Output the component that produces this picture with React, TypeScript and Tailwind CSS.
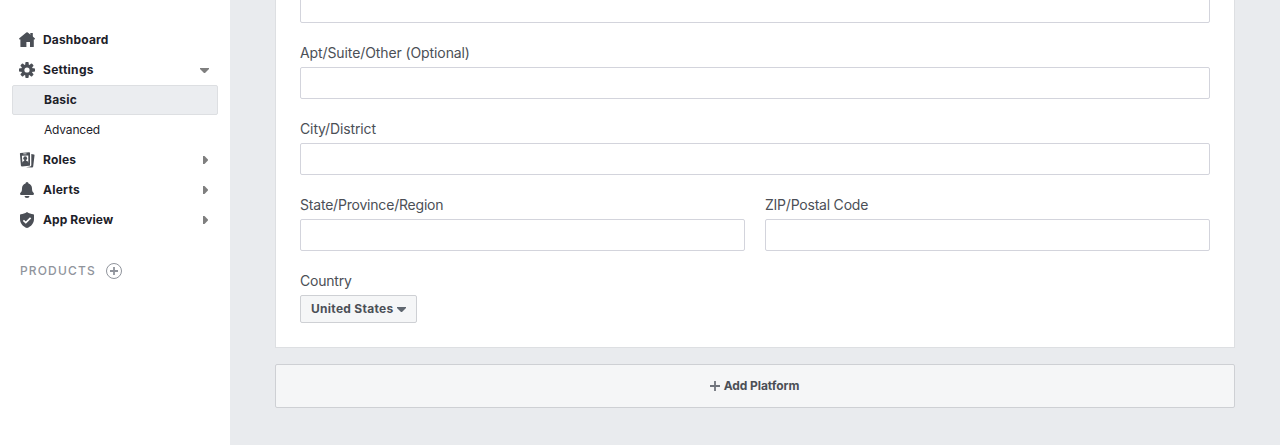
import React from "react";

const Home = () => (
  <svg width="16" height="16" viewBox="0 0 16 16" fill="#4b4f56">
    <path d="M8.8.5 15.800 6.300Q16.200 6.800 15.600 7.500H14.800V14.600a.5.5 0 0 1-.5.500H11V10H7.400V15.100H1.900a.5.5 0 0 1-.5-.5V7.500H.5Q-.2 6.800.3 6.300L7.300.5a1.200 1.200 0 0 1 1.500 0Z" />
    <path d="M11.300 1h2.500v5h-2.500Z" />
  </svg>
);

const Gear = () => (
  <svg width="16" height="16" viewBox="0 0 16 16">
    <g fill="#4b4f56">
      {[0, 45, 90, 135].map((a) => (
        <rect key={a} x="6.300" y="0" width="3.400" height="16" rx="0.9" transform={`rotate(${a} 8 8)`} />
      ))}
      <circle cx="8" cy="8" r="5.800" />
    </g>
    <circle cx="8" cy="8" r="2.600" fill="#fff" />
  </svg>
);

const Roles = () => (
  <svg width="16" height="16" viewBox="0 0 16 16" fill="#4b4f56">
    <path fillRule="evenodd" d="M1.700.9 10 .2a.9.9 0 0 1 1 .9V12.900a.9.9 0 0 1-.9.9L2.900 14.400a.9.9 0 0 1-1-.8L.9 1.800A.8.8 0 0 1 1.700.9ZM4.300 1.400v.9h3.200v-.9ZM2.900 3.700 3.400 11.300 9.300 10.900V3.500Z" />
    <circle cx="6.200" cy="6.200" r="1.900" />
    <path d="M5.200 7.500h2v1.300l2.300 1v1.800l-6.300.5V10l2-1.200Z" />
    <path d="M12.300 1.900 14.900 2.400a.8.8 0 0 1 .6 1L14.200 14.600a.9.9 0 0 1-1 .8L7 15.200l4.200-.8a1.300 1.300 0 0 0 1.100-1.200Z" />
  </svg>
);

const Bell = () => (
  <svg width="16" height="16" viewBox="0 0 16 16" fill="#4b4f56">
    <path d="M8 0a1.500 1.500 0 0 1 1.500 1.500C11.800 2.200 13 4.200 13 6.500c0 2.300.5 3.300 1.500 4.300.9 1 .5 2.200-.7 2.200H2.200c-1.200 0-1.600-1.200-.7-2.200C2.500 9.800 3 8.800 3 6.500c0-2.300 1.200-4.300 3.500-5A1.500 1.500 0 0 1 8 0Z" />
    <path d="M5.500 14h5a2.500 2 0 0 1-5 0Z" />
  </svg>
);

const Shield = () => (
  <svg width="16" height="16" viewBox="0 0 16 16">
    <path d="M8 0c2 1.400 4 2 6.200 2.200.5 0 .8.400.8.900V7c0 4.200-2.800 7.600-7 9-4.200-1.400-7-4.800-7-9V3.100c0-.5.300-.9.800-.9C4 2 6 1.400 8 0Z" fill="#4b4f56" />
    <path d="m4.400 8.300 2.400 2.300 4.800-4.700" fill="none" stroke="#fff" strokeWidth="1.700" />
  </svg>
);

const Down = ({ className }: { className: string }) => (
  <svg width="9" height="5" viewBox="0 0 9 5" className={className} fill="currentColor">
    <path d="M0 0h9v1L5.500 4.500q-1 1-2 0L0 1Z" />
  </svg>
);

const Right = () => (
  <svg width="5" height="8" viewBox="0 0 5 8" className="mr-[10px] text-[#7f7f7f]" fill="currentColor">
    <path d="M0 0h1.500L4.700 3.300q.6.700 0 1.400L1.500 8H0Z" />
  </svg>
);

function NavItem({ icon, label, tracking, trailing }: { icon: React.ReactNode; label: string; tracking: string; trailing?: React.ReactNode }) {
  return (
    <a className="flex h-[30px] items-center pl-[7px] text-[12px] font-bold text-[#1d2129]">
      {icon}
      <span className={`ml-2 grow ${tracking}`}>{label}</span>
      {trailing}
    </a>
  );
}

function Field({ label, tracking }: { label: string; tracking: string }) {
  return (
    <label className="block grow basis-0">
      <span className={`block h-6 text-[14px] leading-[20px] text-[#4b4f56] ${tracking}`}>{label}</span>
      <input className="block h-8 w-full rounded-[2px] border border-[#d3d4dc] bg-white" />
    </label>
  );
}

export default function App() {
  return (
    <div className="flex h-[445px] overflow-hidden bg-[#e9ebee] font-[Inter,sans-serif]">
      <aside className="w-[230px] shrink-0 bg-white px-3 pt-[25px]">
        <nav>
          <NavItem icon={<Home />} label="Dashboard" tracking="tracking-[0.17px]" />
          <NavItem icon={<Gear />} label="Settings" tracking="tracking-[0.3px]" trailing={<Down className="mr-[9px] text-[#7f7f7f]" />} />
          <a className="flex h-[30px] items-center rounded-[2px] border border-[#dddfe2] bg-[#ebedf0] pl-[31px] text-[12px] font-bold tracking-[0.2px] text-[#1d2129]">Basic</a>
          <a className="flex h-[30px] items-center pl-8 text-[12px] tracking-[-0.17px] text-[#1d2129]">Advanced</a>
          <NavItem icon={<Roles />} label="Roles" tracking="tracking-[0.2px]" trailing={<Right />} />
          <NavItem icon={<Bell />} label="Alerts" tracking="tracking-[0.25px]" trailing={<Right />} />
          <NavItem icon={<Shield />} label="App Review" tracking="tracking-[0.1px]" trailing={<Right />} />
        </nav>
        <div className="mt-7 flex h-4 items-center pl-2 text-[12px] font-medium tracking-[1.15px] text-[#90949c]">
          <span className="w-[86px]">PRODUCTS</span>
          <svg width="16" height="16" viewBox="0 0 16 16" fill="none" stroke="#90949c">
            <circle cx="8" cy="8" r="7.500" />
            <path d="M8 4v8M4 8h8" strokeWidth="1.800" />
          </svg>
        </div>
      </aside>
      <main className="grow px-[45px]">
        <section className="flex h-[348px] flex-col justify-end border border-t-0 border-[#dddfe2] bg-white px-6 pb-6">
          <div className="h-8 shrink-0 rounded-[2px] border border-[#d3d4dc]" />
          <div className="mt-5 flex shrink-0"><Field label="Apt/Suite/Other (Optional)" tracking="tracking-[-0.1px]" /></div>
          <div className="mt-5 flex shrink-0"><Field label="City/District" tracking="tracking-[-0.12px]" /></div>
          <div className="mt-5 flex shrink-0 gap-5">
            <Field label="State/Province/Region" tracking="tracking-[-0.2px]" />
            <Field label="ZIP/Postal Code" tracking="tracking-[-0.22px]" />
          </div>
          <div className="mt-5 h-6 shrink-0 text-[14px] leading-[20px] tracking-[-0.2px] text-[#4b4f56]">Country</div>
          <button className="flex h-7 w-[117px] shrink-0 items-center rounded-[2px] border border-[#ced0d4] bg-[#f5f6f7] pl-[10px] text-[12px] font-bold text-[#4b4f56]">
            <span className="w-[86px] text-left tracking-[0.28px] whitespace-nowrap">United States</span>
            <Down className="mt-px text-[#606770]" />
          </button>
        </section>
        <button className="mt-4 flex h-11 w-full items-center justify-center gap-1 rounded-[2px] border border-[#ced0d4] bg-[#f5f6f7] pr-px text-[12px] font-bold tracking-[-0.07px] text-[#4b4f56]">
          <svg width="10" height="10" viewBox="0 0 10 10" stroke="#70747c" strokeWidth="1.800"><path d="M5 0v10M0 5h10" /></svg>
          Add Platform
        </button>
      </main>
    </div>
  );
}
